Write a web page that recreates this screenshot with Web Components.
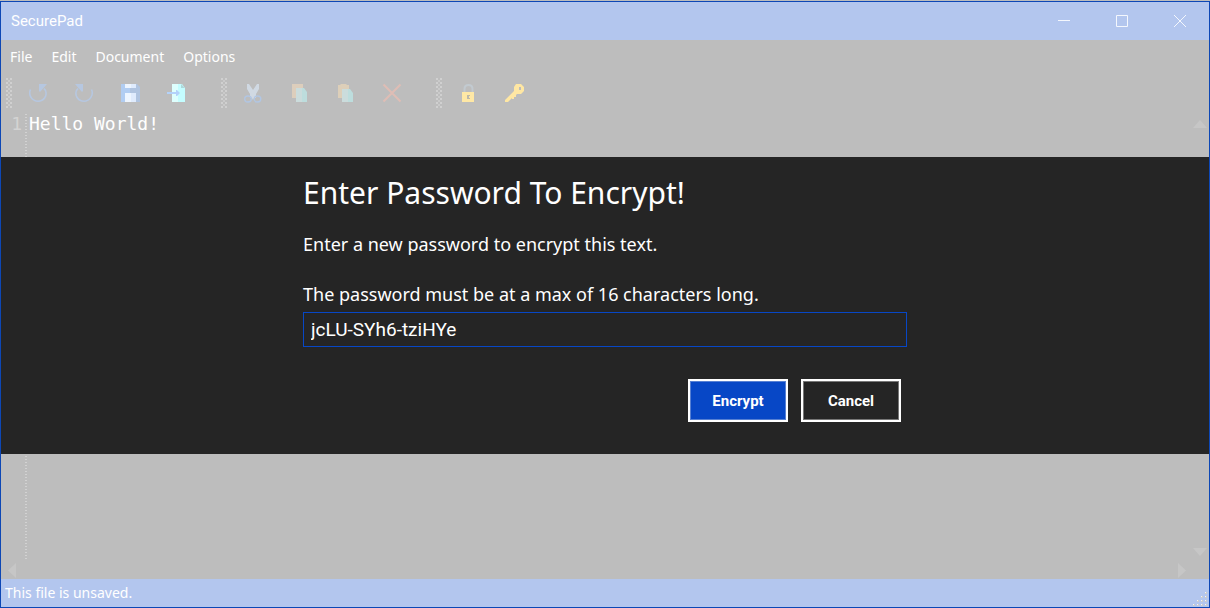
<!DOCTYPE html>
<html lang="en">
<head>
<meta charset="utf-8">
<title>SecurePad</title>
<style>
  html, body { margin: 0; height: 100%; }
  body {
    background: #bdbdbd;
    font-family: "Noto Sans", "Open Sans", sans-serif;
    color: #fff;
    overflow: hidden;
  }
</style>
</head>
<body>
<secure-window>
  <title-bar slot="title">SecurePad</title-bar>
  <menu-bar slot="menu"></menu-bar>
  <tool-bar slot="tools"></tool-bar>
  <text-editor slot="editor"></text-editor>
  <status-bar slot="status">This file is unsaved.</status-bar>
  <password-dialog slot="dialog"></password-dialog>
</secure-window>

<script>
const define = (name, html) => {
  customElements.define(name, class extends HTMLElement {
    constructor() {
      super();
      const template = document.createElement('template');
      template.innerHTML = html;
      this.attachShadow({ mode: 'open' }).append(template.content.cloneNode(true));
    }
  });
};

define('secure-window', `
  <style>
    :host { display: block; height: 100vh; box-sizing: border-box; padding-top: 1px; }
    .frame {
      position: relative; height: 100%; box-sizing: border-box;
      display: flex; flex-direction: column;
      border: 1px solid #0d47b5; background: #bdbdbd;
    }
    .main { flex: 1; min-height: 0; display: flex; }
    .overlay { position: absolute; inset: 0; display: flex; flex-direction: column; justify-content: center; padding-top: 2px; }
  </style>
  <div class="frame">
    <slot name="title"></slot>
    <slot name="menu"></slot>
    <slot name="tools"></slot>
    <div class="main"><slot name="editor"></slot></div>
    <slot name="status"></slot>
    <div class="overlay"><slot name="dialog"></slot></div>
  </div>`);

define('title-bar', `
  <style>
    :host { display: flex; align-items: center; height: 38px; background: #b3c6ee; padding-left: 10px; font: 15px/38px Roboto, sans-serif; }
    .name { flex: 1; }
    button { width: 58px; height: 38px; padding: 0; border: 0; background: none; display: grid; place-items: center; }
    svg { fill: none; stroke: #f4f7fd; display: block; }
  </style>
  <span class="name"><slot></slot></span>
  <button aria-label="Minimize"><svg width="12" height="12"><path d="M0 5.5h12"/></svg></button>
  <button aria-label="Maximize"><svg width="12" height="12"><path d="M.5.5h11v11H.5z"/></svg></button>
  <button aria-label="Close"><svg width="12" height="12"><path d="M0 0l12 12M12 0L0 12"/></svg></button>`);

define('menu-bar', `
  <style>
    nav { display: flex; gap: 19px; padding: 0 9px; height: 34px; align-items: center; }
    button { font: 14px/20px "Noto Sans", sans-serif; color: #fff; background: none; border: 0; padding: 0; }
  </style>
  <nav><button>File</button><button>Edit</button><button>Document</button><button>Options</button></nav>`);

define('tool-group', `
  <style>
    :host { display: flex; align-items: center; gap: 4px; }
    .grip {
      width: 6px; height: 30px;
      background:
        radial-gradient(circle at 1px 1px, #d0d0d0 1px, transparent 1px) 0 0 / 4px 4px,
        radial-gradient(circle at 1px 1px, #cacaca 1px, transparent 1px) 2px 2px / 4px 4px;
    }
    .items { display: flex; }
  </style>
  <div class="grip"></div><div class="items"><slot></slot></div>`);

define('tool-button', `
  <style>
    :host { display: block; }
    button { width: 46px; height: 38px; padding: 0; border: 0; background: none; display: grid; place-items: center; }
  </style>
  <button><slot></slot></button>`);

define('tool-bar', `
  <style>
    :host { display: flex; gap: 21px; padding-left: 5px; height: 38px; }
    svg { display: block; width: 20px; height: 20px; }
  </style>
  <tool-group>
    <tool-button title="Undo"><svg viewBox="0 0 20 20"><path d="M1.500 6.500C-1 12 3 18.200 9 18.200S18.500 12.500 16.500 7.500L15 5.500" fill="none" stroke="#b6c7e0" stroke-width="1.600"/><path d="M10 1h8l-7 8-1-1z" fill="#b6c7e0"/></svg></tool-button>
    <tool-button title="Redo"><svg viewBox="0 0 20 20"><path d="M16.500 6.500C19 12 15 18.200 9 18.200S-.5 12.500 1.500 7.500L3 5.500" fill="none" stroke="#b6c7e0" stroke-width="1.600"/><path d="M8 1H0l7 8 1-1z" fill="#b6c7e0"/></svg></tool-button>
    <tool-button title="Save"><svg viewBox="1 0 20 20"><path d="M1 1h9v18H1z" fill="#b1cdf2"/><path d="M10 1h7l3 3v15H10z" fill="#b0c4e0"/><path d="M5 1h6v4H5zM5 10h6v9H5z" fill="#edf5ff"/><path d="M11 1h5v4h-5zM11 10h5v9h-5z" fill="#dfebfd"/></svg></tool-button>
    <tool-button title="Export"><svg viewBox="0 0 20 20"><path d="M5 1h6v18H5z" fill="#defffe"/><path d="M11 1h4l3 4v14h-7z" fill="#c4fdff"/><path d="M14 1l4 4h-4z" fill="#afd9db"/><path d="M0 9h9V7h1l3 3-3 3H9v-2H0z" fill="#b3d2fa"/></svg></tool-button>
  </tool-group>
  <tool-group>
    <tool-button title="Cut"><svg viewBox="1 0 20 20"><path d="M4 1h2l4 6 4-6h2v5l-3 5v4h-2l-1 2-1-2H7v-4L4 6z" fill="#d0d9e3"/><g fill="none" stroke="#b1c6e3" stroke-width="1.400"><ellipse cx="5" cy="16" rx="3.300" ry="3"/><ellipse cx="14.500" cy="16" rx="3.300" ry="3"/></g></svg></tool-button>
    <tool-button title="Copy"><svg viewBox="0 0 20 20"><path d="M2 1h11v14H2z" fill="#ddcebc"/><path d="M6 5h6v14H6z" fill="#cbdcdc"/><path d="M12 5h2l3 4v10h-5z" fill="#bddddd"/></svg></tool-button>
    <tool-button title="Paste"><svg viewBox="0 0 20 20"><path d="M2 2h2l1-1h5l1 1h2v13H2z" fill="#ddcfb9"/><path d="M6 6h6v13H6z" fill="#cbdcdc"/><path d="M12 6h2l3 4v9h-5z" fill="#bddddd"/></svg></tool-button>
    <tool-button title="Delete"><svg viewBox="0 0 20 20"><path d="M1.500 1.500l17 17M18.500 1.500l-17 17" stroke="#dfbdb5" stroke-width="2"/></svg></tool-button>
  </tool-group>
  <tool-group>
    <tool-button title="Encrypt"><svg viewBox="0 0 20 20"><path d="M5.500 9V6q0-4 4-4t4 4v3" fill="none" stroke="#c2cad0" stroke-width="2"/><path d="M3 9h12v10H3z" fill="#ffe8a5"/><path d="M8 12h3v1h-1v2h1v1H8z" fill="#bdb9aa"/></svg></tool-button>
    <tool-button title="Decrypt"><svg viewBox="0 0 20 20"><path fill-rule="evenodd" d="M11 1h5l3 3v4l-3 3h-4l-1 1v2h-2v2H7v-1l-4 4H0v-2l9-9V4zM14 4v3h2V4z" fill="#ffe7a3"/></svg></tool-button>
  </tool-group>`);

define('text-editor', `
  <style>
    :host { flex: 1; display: grid; grid-template: 1fr 18px / 24px 1fr 17px; padding-top: 2px; }
    .gutter, textarea { font: 18px/20px "DejaVu Sans Mono", monospace; }
    .gutter { text-align: right; padding-right: 3px; color: #d3d3d3; }
    textarea {
      border: 0; outline: 0; resize: none; margin: 0; padding: 0 0 0 4px; overflow: hidden;
      color: #fff;
      background: repeating-linear-gradient(#d2d2d2 0 1px, transparent 1px 3px) 0 0 / 2px 100% no-repeat;
    }
    svg { display: block; fill: #c6c6c6; }
    .v { display: flex; flex-direction: column; justify-content: space-between; padding: 6px 0 5px 1px; }
    .h { grid-column: 1 / -1; display: flex; justify-content: space-between; padding: 2px 23px 1px 7px; }
  </style>
  <div class="gutter">1</div>
  <textarea aria-label="Document text" spellcheck="false">Hello World!</textarea>
  <div class="v">
    <svg width="14" height="8"><path d="M7 0l7 8H0z"/></svg>
    <svg width="14" height="8"><path d="M7 8l7-8H0z"/></svg>
  </div>
  <div class="h">
    <svg width="8" height="15"><path d="M0 7.500L8 0v15z"/></svg>
    <svg width="8" height="15"><path d="M8 7.500L0 0v15z"/></svg>
  </div>`);

define('status-bar', `
  <style>
    :host { display: flex; justify-content: space-between; align-items: center; height: 28px; padding: 0 1px 0 4px; background: #b3c6ee; font-size: 14px; line-height: 30px; }
    svg { align-self: flex-end; padding-bottom: 1px; }
  </style>
  <span><slot></slot></span>
  <svg width="16" height="15"><g fill="#ccc"><path d="M13 1h2v2h-2zM9 5h2v2H9zM13 5h2v2h-2zM5 9h2v2H5zM9 9h2v2H9zM13 9h2v2h-2zM1 13h2v2H1zM5 13h2v2H5zM9 13h2v2H9zM13 13h2v2h-2z"/></g><g fill="#f4f4f4"><path d="M13 1h1v1h-1zM9 5h1v1H9zM13 5h1v1h-1zM5 9h1v1H5zM9 9h1v1H9zM13 9h1v1h-1zM1 13h1v1H1zM5 13h1v1H5zM9 13h1v1H9zM13 13h1v1h-1z"/></g></svg>`);

define('flat-button', `
  <style>
    :host { display: block; }
    button {
      width: 100px; height: 43px; padding: 0; color: #fff;
      border: 2px solid #fff; background: #252525; box-shadow: inset 0 0 0 1px #777;
      font: 700 15px/20px Roboto, sans-serif;
    }
    :host([primary]) button { background: #0747c6; box-shadow: inset 0 0 0 1px #5680d3; }
  </style>
  <button><slot></slot></button>`);

define('password-dialog', `
  <style>
    :host { display: block; background: #252525; }
    form { width: 50%; margin: 0 auto; padding: 16px 0 32px; }
    h1 { margin: 0 0 19px; font-weight: 400; font-size: 30px; line-height: 40px; }
    p, label { display: block; margin: 0; font-size: 18px; line-height: 25px; }
    p { margin-bottom: 25px; }
    input {
      display: block; box-sizing: border-box; width: 100%; height: 35px; margin: 5px 0 32px; padding: 0 7px;
      border: 1px solid #0747c6; outline: 0; border-radius: 0; background: #252525; color: #fff;
      font: 19px/25px Roboto, sans-serif;
    }
    .actions { display: flex; justify-content: flex-end; gap: 13px; padding-right: 6px; }
  </style>
  <form role="dialog" aria-labelledby="heading">
    <h1 id="heading">Enter Password To Encrypt!</h1>
    <p>Enter a new password to encrypt this text.</p>
    <label for="password">The password must be at a max of 16 characters long.</label>
    <input id="password" type="text" maxlength="16" value="jcLU-SYh6-tziHYe">
    <div class="actions">
      <flat-button primary>Encrypt</flat-button>
      <flat-button>Cancel</flat-button>
    </div>
  </form>`);
</script>
</body>
</html>
